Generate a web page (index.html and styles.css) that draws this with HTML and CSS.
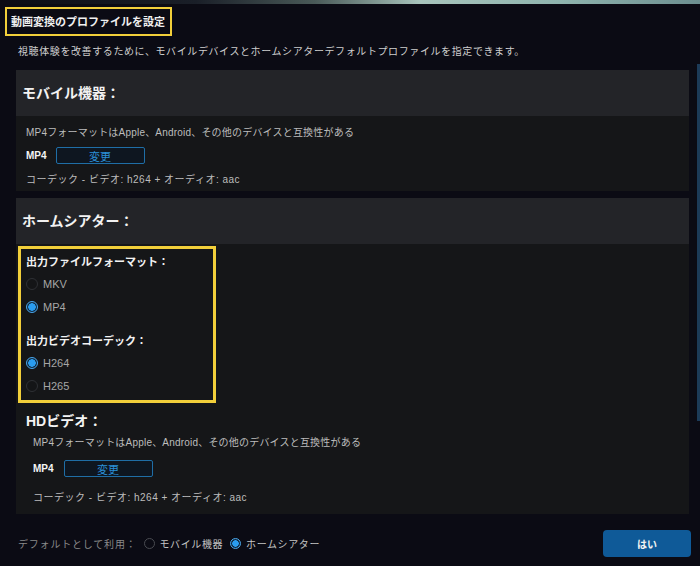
FILE: index.html
```html
<!DOCTYPE html>
<html>
  <head>
    <title>動画変換のプロファイルを設定</title>
    <link rel="stylesheet" href="styles.css">
  </head>
  <body>
    <div class="topstrip"></div>
    <div class="titlebox">動画変換のプロファイルを設定</div>
    <p class="desc">視聴体験を改善するために、モバイルデバイスとホームシアターデフォルトプロファイルを指定できます。</p>

    <div class="scrollarea">
      <div class="panel">
        <div class="panelhead">モバイル機器：</div>
        <div class="panelbody first">
          <p class="info">MP4フォーマットはApple、Android、その他のデバイスと互換性がある</p>
          <div class="formatrow">
            <span class="fmt">MP4</span>
            <button class="changebtn">変更</button>
          </div>
          <p class="info codec">コーデック - ビデオ: h264 + オーディオ: aac</p>
        </div>
      </div>

      <div class="panel">
        <div class="panelhead">ホームシアター：</div>
        <div class="panelbody second">
          <div class="optbox">
            <p class="optlabel">出力ファイルフォーマット：</p>
            <label class="radiorow"><span class="radio"></span>MKV</label>
            <label class="radiorow"><span class="radio on"></span>MP4</label>
            <p class="optlabel gap">出力ビデオコーデック：</p>
            <label class="radiorow"><span class="radio on"></span>H264</label>
            <label class="radiorow"><span class="radio"></span>H265</label>
          </div>
          <div class="hdblock">
            <p class="hdtitle">HDビデオ：</p>
            <p class="info">MP4フォーマットはApple、Android、その他のデバイスと互換性がある</p>
            <div class="formatrow">
              <span class="fmt">MP4</span>
              <button class="changebtn">変更</button>
            </div>
            <p class="info codec">コーデック - ビデオ: h264 + オーディオ: aac</p>
          </div>
        </div>
      </div>
      <div class="thumb"></div>
    </div>

    <div class="footer">
      <div class="defaults">
        <span class="deftitle">デフォルトとして利用：</span>
        <span class="radio small"></span><span class="deflabel">モバイル機器</span>
        <span class="radio small on"></span><span class="deflabel">ホームシアター</span>
      </div>
      <button class="okbtn">はい</button>
    </div>
  </body>
</html>
```

FILE: styles.css
```css
body{
  margin: 0;
  width: 700px;
  height: 566px;
  overflow: hidden;
  background-color: #0b0b14;
  color: #d8d8d8;
  font-family: "Liberation Sans", "Noto Sans CJK JP", sans-serif;
}
p{
  margin: 0;
}
.topstrip{
  height: 4px;
  background: linear-gradient(to right, #0b0b14 0%, #1a1f28 28%, #4a5a58 45%, #a8c4bc 60%, #8fb4ae 80%, #6d8f90 100%);
}
.titlebox{
  display: inline-block;
  margin: 3px 0 0 5px;
  padding: 4px 5px 5px 4px;
  border: 2px solid #f2cf3a;
  font-size: 11px;
  font-weight: bold;
  color: #f0f0f0;
}
.desc{
  margin: 7px 0 0 18px;
  font-size: 10px;
  color: #cfcfcf;
  letter-spacing: 0.6px;
}
.scrollarea{
  position: relative;
  margin-top: 6px;
  height: 449px;
  padding: 6px 11px 0 16px;
  overflow: hidden;
}
.thumb{
  position: absolute;
  right: 0;
  top: 0;
  width: 3px;
  height: 357px;
  background-color: #1c3b58;
}
.panel{
  margin-bottom: 7px;
}
.panelhead{
  height: 46px;
  line-height: 46px;
  padding-left: 6px;
  background-color: #232428;
  font-size: 14px;
  font-weight: bold;
  color: #f2f2f2;
}
.panelbody{
  background-color: #151618;
}
.panelbody.first{
  height: 75px;
  padding: 8px 10px 0;
  box-sizing: border-box;
}
.panelbody.second{
  height: 270px;
  padding-top: 2px;
  box-sizing: border-box;
}
.info{
  font-size: 10px;
  color: #bdbdbd;
  letter-spacing: 0.2px;
}
.info.codec{
  letter-spacing: 0.5px;
}
.formatrow{
  display: flex;
  align-items: center;
  gap: 9px;
  margin: 8px 0 7px;
}
.fmt{
  font-size: 10px;
  font-weight: bold;
  color: #f4f4f4;
}
.changebtn{
  width: 89px;
  height: 17px;
  padding: 0;
  border: 1px solid #1f6ea6;
  border-radius: 2px;
  background-color: #0e1620;
  color: #2b8fd6;
  font-family: inherit;
  font-size: 11px;
}
.optbox{
  width: 187px;
  margin-left: 2px;
  padding: 4px 0 3px 5px;
  border: 3px solid #f2cf3a;
}
.optlabel{
  font-size: 11px;
  font-weight: bold;
  color: #f2f2f2;
  margin-bottom: 3px;
}
.optlabel.gap{
  margin-top: 14px;
}
.radiorow{
  display: flex;
  align-items: center;
  gap: 5px;
  height: 23px;
  font-size: 11px;
  color: #a6a6a6;
}
.radio{
  display: inline-block;
  width: 10px;
  height: 10px;
  border: 1px solid #2e3034;
  border-radius: 50%;
  background-color: #141517;
}
.radio.on{
  border-color: #4aa6ea;
  background: radial-gradient(circle, #2a9df0 0 3.5px, #0f2a42 4px);
}
.hdblock{
  padding: 7px 0 0 10px;
}
.hdtitle{
  font-size: 14px;
  font-weight: bold;
  color: #f4f4f4;
  margin-bottom: 4px;
}
.hdblock .info{
  margin-left: 7px;
}
.hdblock .formatrow{
  margin: 11px 0 12px 7px;
  gap: 10px;
}
.footer{
  display: flex;
  align-items: center;
  justify-content: space-between;
  padding: 11px 9px 0 18px;
}
.defaults{
  display: flex;
  align-items: center;
  gap: 5px;
  font-size: 10px;
  color: #8a8a8a;
}
.deftitle{
  letter-spacing: 0.8px;
  margin-right: 2px;
}
.deflabel{
  color: #c4c4c4;
  letter-spacing: 0.6px;
  margin-right: 2px;
}
.radio.small{
  width: 9px;
  height: 9px;
  border-color: #4a4c52;
  background-color: #0b0b14;
}
.radio.small.on{
  border-color: #4aa6ea;
  background: radial-gradient(circle, #2a9df0 0 3px, #0f2a42 3.5px);
}
.okbtn{
  width: 88px;
  height: 27px;
  border: none;
  border-radius: 4px;
  background-color: #0f5a98;
  color: #f2f2f2;
  font-family: inherit;
  font-size: 10px;
  font-weight: bold;
}
```
